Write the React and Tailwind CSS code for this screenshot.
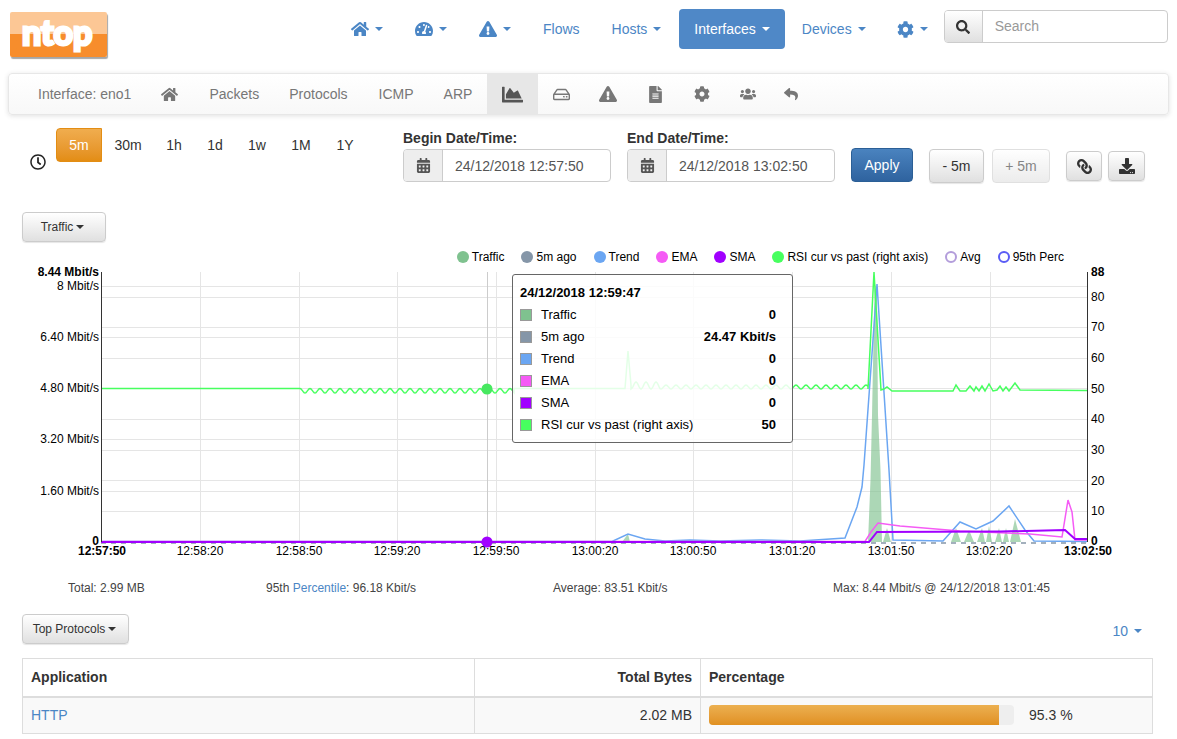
import { FaHome, FaTachometerAlt, FaExclamationTriangle, FaCog, FaSearch, FaRegClock, FaCalendarAlt, FaLink, FaDownload, FaChartArea, FaRegHdd, FaFileAlt, FaUsers, FaReply } from 'react-icons/fa'

function Caret({ className = 'ml-[6px]' }) {
  return <span className={`inline-block w-0 h-0 border-x-4 border-t-4 border-x-transparent border-t-current ${className}`} />
}

function NavItem({ children, active, caret = true, className = '' }) {
  return (
    <a className={`flex items-center h-10 px-[15px] rounded text-sm ${active ? 'bg-[#4f88c7] text-white' : 'text-[#4b86c5]'} ${className}`}>
      {children}
      {caret && <Caret />}
    </a>
  )
}

function SubItem({ children, active, className = '' }) {
  return (
    <a className={`flex items-center h-10 px-[15px] text-sm ${active ? 'bg-[#e7e7e7] text-[#555]' : 'text-[#777]'} ${className}`}>
      {children}
    </a>
  )
}

function TimeBtn({ label, active, className }) {
  return (
    <button className={`h-[34px] text-sm ${active ? 'bg-linear-to-b from-[#f0ad4e] to-[#e38d13] border border-[#e38d13] text-white rounded-l' : 'text-[#333]'} ${className}`}>
      {label}
    </button>
  )
}

function DateField({ label, value, className = '' }) {
  return (
    <div className={`w-[208px] ${className}`}>
      <div className="text-sm font-bold text-[#333] leading-[20px] mb-[1px]">{label}</div>
      <div className="flex h-[33px] border border-[#ccc] rounded overflow-hidden">
        <span className="w-[39px] bg-[#eee] border-r border-[#ccc] flex items-center justify-center text-[#555] text-[15px]">
          <FaCalendarAlt />
        </span>
        <span className="pl-3 flex items-center text-sm text-[#555]">{value}</span>
      </div>
    </div>
  )
}

function GreyBtn({ children, className = '' }) {
  return (
    <button className={`flex items-center justify-center bg-linear-to-b from-white to-[#e0e0e0] border border-[#ccc] rounded text-[#333] shadow-[0_1px_1px_rgba(0,0,0,0.1)] ${className}`}>
      {children}
    </button>
  )
}

function LegendItem({ color, label, hollow }) {
  return (
    <div className="flex items-center gap-[3px] text-xs text-black">
      <span
        className={`w-3 h-3 rounded-full ${hollow ? 'border-2 bg-white' : ''}`}
        style={hollow ? { borderColor: color } : { background: color }}
      />
      {label}
    </div>
  )
}

// rsi wiggle, smooth bumps of one sign between two x
function wiggle(x0, x1, base, amp, period = 10) {
  const pts = []
  for (let x = x0; x <= x1; x += 1) {
    const a = typeof amp === 'function' ? amp(x) : amp
    pts.push(`${x},${(base + (a * (1 - Math.cos(((x - x0) * 2 * Math.PI) / period))) / 2).toFixed(1)}`)
  }
  return pts.join(' ')
}

const rsi = [
  '101,388.5 300,388.5',
  wiggle(300, 514, 388.5, 4.5),
  '514,388.5 625,388.5 628,351 631,385',
  wiggle(631, 868, 389, (x) => (x < 660 ? -7 : -4)),
  '868,389 874,272 881,390 884,389 887,387 892,391 953,391 956,385 960,391 966,391 970,386 974,391 976,387 979,391 982,386 985,391 989,384 993,391 997,390 1000,386 1003,391 1006,387 1009,391 1015,383 1020,390 1087,390.5',
].join(' ')

const trend = '101,541.5 612,541.5 628,534 645,539 665,541 690,540 720,541 760,540 800,541 845,538 857,507 862,487 864,465 877,284 889,470 893,540 943,541 960,522 976,529 993,521 1009,506 1025,530 1034,541 1087,541.5'
const ema = '101,541.5 865,541.5 871,532 878,523 900,526 960,531 1030,534 1062,537 1068,500 1072,512 1075,540 1087,540'
const sma = '101,542 869,542 877,532 1000,531.5 1065,530 1075,539 1087,539'
const traffic = '101,542 622,542 628,534 630,542 868,542 870.5,480 872,415 874.5,290 875.5,284 877,300 878,415 880.5,470 882,542 883,542 887,528 891,542 951,542 956,528 961,542 964,542 969,530 974,542 977,542 982,528 985,542 986,542 989,526 992,542 995,542 999,528 1002,542 1003,542 1006,528 1009,542 1010,542 1015,519 1021,542'

const hGrid = [286, 297, 327, 337, 358, 388, 419, 439, 450, 480, 491, 511]
const vGrid = [200, 299, 397, 496, 595, 693, 792, 891, 990]
const leftLabels = [['6.40 Mbit/s', 337], ['4.80 Mbit/s', 388], ['3.20 Mbit/s', 439], ['1.60 Mbit/s', 491]]
const rightLabels = [['80', 297], ['70', 327], ['60', 358], ['50', 389], ['40', 419], ['30', 450], ['20', 481], ['10', 511]]
const timeLabels = [['12:58:20', 200], ['12:58:50', 299], ['12:59:20', 397], ['12:59:50', 496], ['13:00:20', 595], ['13:00:50', 693], ['13:01:20', 792], ['13:01:50', 891], ['13:02:20', 989]]

const tipRows = [
  ['#7fc28f', 'Traffic', '0'],
  ['#8596a8', '5m ago', '24.47 Kbit/s'],
  ['#6ba6f2', 'Trend', '0'],
  ['#f55bf5', 'EMA', '0'],
  ['#a100ff', 'SMA', '0'],
  ['#47ff5f', 'RSI cur vs past (right axis)', '50'],
]

function Chart() {
  return (
    <div className="relative h-[312px]">
      <svg className="block" width="1177" height="312" viewBox="0 264 1177 312" fontSize="12" fill="#000">
        {hGrid.map((y) => <line key={y} x1="101" x2="1087" y1={y + 0.5} y2={y + 0.5} stroke="#e5e5e5" />)}
        {vGrid.map((x) => <line key={x} x1={x + 0.5} x2={x + 0.5} y1="272" y2="542" stroke="#e5e5e5" />)}
        <line x1="487.5" x2="487.5" y1="272" y2="542" stroke="#ccc" />
        <polygon points={traffic} fill="#7fc28f" fillOpacity="0.65" />
        <line x1="101" x2="1087" y1="543" y2="543" stroke="#8596a8" strokeWidth="1.5" strokeDasharray="5 5" />
        <polyline points={trend} fill="none" stroke="#6ba6f2" strokeWidth="1.5" />
        <polyline points={rsi} fill="none" stroke="#47ff5f" strokeWidth="1.5" />
        <polyline points={ema} fill="none" stroke="#f55bf5" strokeWidth="1.5" />
        <polyline points={sma} fill="none" stroke="#a100ff" strokeWidth="2" />
        <circle cx="487" cy="389" r="5.5" fill="#47e860" />
        <circle cx="487" cy="542" r="5.5" fill="#a100ff" />
        <line x1="101.5" x2="101.5" y1="272" y2="542" stroke="#333" />
        <line x1="1087.5" x2="1087.5" y1="272" y2="542" stroke="#333" />
        <text x="99" y="276" textAnchor="end" fontWeight="bold">8.44 Mbit/s</text>
        <text x="99" y="290" textAnchor="end">8 Mbit/s</text>
        {leftLabels.map(([t, y]) => <text key={t} x="99" y={y + 4} textAnchor="end">{t}</text>)}
        <text x="99" y="545" textAnchor="end" fontWeight="bold">0</text>
        <text x="1091" y="276" fontWeight="bold">88</text>
        {rightLabels.map(([t, y]) => <text key={t} x="1091" y={y + 4}>{t}</text>)}
        <text x="1091" y="545" fontWeight="bold">0</text>
        <text x="102" y="555" textAnchor="middle" fontWeight="bold">12:57:50</text>
        {timeLabels.map(([t, x]) => <text key={t} x={x} y="555" textAnchor="middle">{t}</text>)}
        <text x="1088" y="555" textAnchor="middle" fontWeight="bold">13:02:50</text>
      </svg>
      <div className="absolute left-[512px] top-[10px] w-[281px] h-[169px] bg-white/85 border border-[#666] rounded-[3px] pl-[7px] pr-[16px] pt-[9px] text-[13px] text-black">
        <div className="font-bold leading-[17px] mb-[3px]">24/12/2018 12:59:47</div>
        {tipRows.map(([color, label, value]) => (
          <div key={label} className="flex items-center h-[22px]">
            <span className="w-3 h-3 border border-[#999] mr-[9px]" style={{ background: color }} />
            <span>{label}</span>
            <span className="ml-auto font-bold">{value}</span>
          </div>
        ))}
      </div>
    </div>
  )
}

export default function App() {
  return (
    <div className="w-[1177px] h-[739px] overflow-hidden bg-white text-[#333] font-['Liberation_Sans',Arial,sans-serif]">
      {/* top bar */}
      <div className="flex h-[73px] pl-[10px] pt-[9px]">
        <div className="relative w-[97px] h-[45px] mt-[3px] rounded-[2px] shadow-[1px_2px_1px_rgba(0,0,0,0.35)] bg-linear-to-b from-[#fcc795] from-50% to-[#f78d2c] to-50%">
          <span className="absolute left-[12px] top-[1px] text-[34px] leading-[38px] font-bold text-white font-['Lato',sans-serif] [-webkit-text-stroke:3px_white]">ntop</span>
        </div>
        <nav className="flex gap-[2px] ml-[229px]">
          <NavItem><FaHome className="text-[18px]" /></NavItem>
          <NavItem><FaTachometerAlt className="text-[18px]" /></NavItem>
          <NavItem><FaExclamationTriangle className="text-[18px]" /></NavItem>
          <NavItem caret={false}>Flows</NavItem>
          <NavItem>Hosts</NavItem>
          <NavItem active className="ml-[1px]">Interfaces</NavItem>
          <NavItem>Devices</NavItem>
          <NavItem className="ml-[-1px]"><FaCog className="text-[17px]" /></NavItem>
        </nav>
        <div className="flex ml-[1px] mt-[1px] w-[224px] h-[33px] border border-[#ccc] rounded overflow-hidden">
          <span className="w-[38px] flex items-center justify-center bg-linear-to-b from-white to-[#e0e0e0] border-r border-[#ccc] text-[14px] text-[#333]"><FaSearch /></span>
          <span className="pl-3 pb-[1px] flex items-center text-sm text-[#999]">Search</span>
        </div>
      </div>

      {/* interface menu */}
      <div className="flex items-center h-[42px] mx-2 pl-[14px] border border-[#e7e7e7] rounded bg-linear-to-b from-white to-[#f8f8f8] shadow-[0_1px_5px_rgba(0,0,0,0.12)]">
        <SubItem>Interface: eno1</SubItem>
        <SubItem className="text-[17px]"><FaHome /></SubItem>
        <SubItem className="ml-[1px]">Packets</SubItem>
        <SubItem>Protocols</SubItem>
        <SubItem className="ml-[1px]">ICMP</SubItem>
        <SubItem>ARP</SubItem>
        <SubItem active className="text-[21px]"><FaChartArea /></SubItem>
        <SubItem className="text-[17px]"><FaRegHdd /></SubItem>
        <SubItem className="text-[18px] ml-[-1px]"><FaExclamationTriangle /></SubItem>
        <SubItem className="text-[17px]"><FaFileAlt /></SubItem>
        <SubItem className="text-[16px]"><FaCog /></SubItem>
        <SubItem className="text-[16px]"><FaUsers /></SubItem>
        <SubItem className="text-[14px] ml-[-2px]"><FaReply /></SubItem>
      </div>

      {/* time range */}
      <div className="flex h-[84px] mt-[13px] pl-[30px]">
        <FaRegClock className="text-[16px] mt-[26px] text-[#222]" />
        <div className="flex ml-[10px] gap-[1px]">
          <TimeBtn label="5m" active className="w-[46px]" />
          <TimeBtn label="30m" className="w-[50px]" />
          <TimeBtn label="1h" className="w-[40px]" />
          <TimeBtn label="1d" className="w-[40px]" />
          <TimeBtn label="1w" className="w-[42px]" />
          <TimeBtn label="1M" className="w-[44px]" />
          <TimeBtn label="1Y" className="w-[42px]" />
        </div>
        <DateField label="Begin Date/Time:" value="24/12/2018 12:57:50" className="ml-[37px]" />
        <DateField label="End Date/Time:" value="24/12/2018 13:02:50" className="ml-[16px]" />
        <button className="w-[62px] h-[34px] mt-[20px] ml-[16px] rounded text-sm text-white border border-[#2b5f96] bg-linear-to-b from-[#4a83bf] to-[#2f639f]">Apply</button>
        <GreyBtn className="w-[55px] h-[34px] mt-[21px] ml-[16px] text-sm">- 5m</GreyBtn>
        <GreyBtn className="w-[58px] h-[34px] mt-[21px] ml-[8px] text-sm opacity-60 shadow-none">+ 5m</GreyBtn>
        <GreyBtn className="w-[36px] h-[30px] mt-[23px] ml-[16px] text-[15px]"><FaLink className="-scale-x-100" /></GreyBtn>
        <GreyBtn className="w-[37px] h-[30px] mt-[23px] ml-[6px] text-[16px]"><FaDownload /></GreyBtn>
      </div>

      <div className="pl-[22px]">
        <GreyBtn className="w-[84px] h-[30px] pr-[3px] text-xs">Traffic<Caret className="ml-[3px]" /></GreyBtn>
      </div>

      {/* legend */}
      <div className="flex justify-end gap-[17px] h-[13px] mt-[8px] mb-[1px] pr-[113px] items-center">
        <LegendItem color="#7fc28f" label="Traffic" />
        <LegendItem color="#8596a8" label="5m ago" />
        <LegendItem color="#6ba6f2" label="Trend" />
        <LegendItem color="#f55bf5" label="EMA" />
        <LegendItem color="#a100ff" label="SMA" />
        <LegendItem color="#47ff5f" label="RSI cur vs past (right axis)" />
        <LegendItem color="#b39ddb" label="Avg" hollow />
        <LegendItem color="#5a5cf5" label="95th Perc" hollow />
      </div>

      <Chart />

      {/* totals */}
      <div className="flex text-xs leading-4 text-[#444] mt-[4px] pl-[68px]">
        <span className="w-[198px]">Total: 2.99 MB</span>
        <span className="w-[287px]">95th <a className="text-[#4b86c5]">Percentile</a>: 96.18 Kbit/s</span>
        <span className="w-[280px]">Average: 83.51 Kbit/s</span>
        <span>Max: 8.44 Mbit/s @ 24/12/2018 13:01:45</span>
      </div>

      <div className="flex items-start justify-between mt-[18px] pl-[22px] pr-[35px]">
        <GreyBtn className="w-[107px] h-[30px] pr-[2px] text-xs">Top Protocols<Caret className="ml-[3px]" /></GreyBtn>
        <a className="flex items-center text-sm text-[#4b86c5] mt-[7px]">10<Caret /></a>
      </div>

      <table className="w-[1131px] ml-[22px] mt-[14px] border-collapse table-fixed text-sm">
        <thead>
          <tr className="h-[38px] border-b-2 border-[#ddd]">
            <th className="w-[452px] border border-[#ddd] border-b-2 px-2 text-left font-bold">Application</th>
            <th className="w-[226px] border border-[#ddd] border-b-2 px-2 text-right font-bold">Total Bytes</th>
            <th className="border border-[#ddd] border-b-2 px-2 text-left font-bold">Percentage</th>
          </tr>
        </thead>
        <tbody>
          <tr className="h-[37px] bg-[#f9f9f9]">
            <td className="border border-[#ddd] px-2"><a className="text-[#4b86c5]">HTTP</a></td>
            <td className="border border-[#ddd] px-2 text-right">2.02 MB</td>
            <td className="border border-[#ddd] px-2">
              <div className="flex items-center">
                <div className="w-[305px] h-5 rounded bg-[#eee] overflow-hidden">
                  <div className="w-[95%] h-full bg-linear-to-b from-[#ecb050] to-[#e09020]" />
                </div>
                <span className="ml-[15px]">95.3 %</span>
              </div>
            </td>
          </tr>
        </tbody>
      </table>
    </div>
  )
}
